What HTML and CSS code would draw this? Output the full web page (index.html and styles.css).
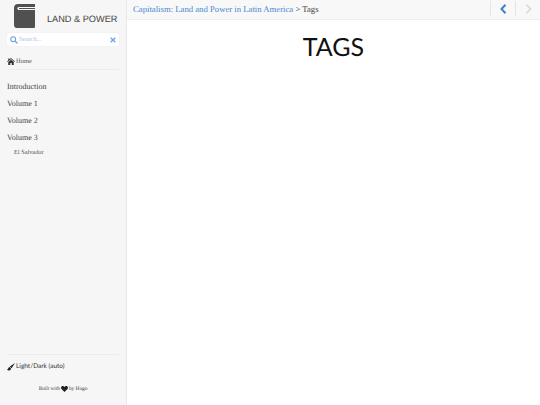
FILE: index.html
```html
<!DOCTYPE html>
<html lang="en">
<head>
  <meta charset="UTF-8">
  <title>Tags</title>
  <link rel="stylesheet" href="styles.css">
</head>
<body>
  <div class="layout">
    <!-- Sidebar -->
    <aside class="sidebar">
      <div class="brand">
        <svg class="brand-icon" width="21" height="24" viewBox="0 0 21 24">
          <path d="M4 0H21V3H5.500C4 3 3.300 3.700 3.300 4.500S4 6 5.500 6H21V22.500C21 23.500 20.500 24 19.500 24H3C1 24 0 23 0 21V4C0 1.500 1.500 0 4 0Z" fill="#505050"/>
          <path d="M5 4H21V5H5Z" fill="#505050"/>
        </svg>
        <span class="brand-name">LAND &amp; POWER</span>
      </div>
      <div class="search">
        <svg class="search-icon" width="8" height="8" viewBox="0 0 8 8">
          <circle cx="3.200" cy="3.200" r="2.400" fill="none" stroke="#6ea4e0" stroke-width="1.100"/>
          <path d="M5 5L7.500 7.500" stroke="#6ea4e0" stroke-width="1.300"/>
        </svg>
        <span class="search-text">Search...</span>
        <svg class="search-clear" width="6" height="6" viewBox="0 0 6 6">
          <path d="M.7 .7L5.300 5.300M5.300 .7L.7 5.300" stroke="#6ea4e0" stroke-width="1.400"/>
        </svg>
      </div>
      <div class="home">
        <svg width="8" height="7" viewBox="0 0 16 14">
          <path d="M8 0L16 7L15 8.200L8 2.200L1 8.200L0 7L2.500 4.800V1H5V2.600ZM8 3.500L13.500 8.200V14H9.500V10H6.500V14H2.500V8.200Z" fill="#333"/>
        </svg>
        <span>Home</span>
      </div>
      <nav class="menu">
        <a class="menu-item">Introduction</a>
        <a class="menu-item">Volume 1</a>
        <a class="menu-item">Volume 2</a>
        <a class="menu-item">Volume 3</a>
        <a class="menu-sub">El Salvador</a>
      </nav>
      <div class="sidebar-foot">
        <div class="theme">
          <svg width="8" height="8" viewBox="0 0 14 14">
            <path d="M14 0L5 6L8 9ZM4.500 7C2.500 7 2.500 10 0 12C2.500 14 7 13.500 7 9.500Z" fill="#222"/>
          </svg>
          <span>Light/Dark (auto)</span>
        </div>
        <div class="built">
          Built with
          <svg width="7" height="6" viewBox="0 0 14 12">
            <path d="M7 12L1 6C-1.500 3 1 0 3.500 0C5 0 6.300 .8 7 2C7.700 .8 9 0 10.500 0C13 0 15.500 3 13 6Z" fill="#222"/>
          </svg>
          by Hugo
        </div>
      </div>
    </aside>

    <!-- Content -->
    <main class="main">
      <header class="topbar">
        <div class="crumbs"><a class="crumb-link">Capitalism: Land and Power in Latin America</a> &gt; Tags</div>
        <div class="pager">
          <span class="pager-btn">
            <svg width="7" height="10" viewBox="0 0 7 10"><path d="M5.500 .8L1.500 5L5.500 9.200" fill="none" stroke="#3f7fd0" stroke-width="2"/></svg>
          </span>
          <span class="pager-btn">
            <svg width="7" height="10" viewBox="0 0 7 10"><path d="M1.500 .8L5.500 5L1.500 9.200" fill="none" stroke="#d8d8d8" stroke-width="1.600"/></svg>
          </span>
        </div>
      </header>
      <h1 class="title">TAGS</h1>
    </main>
  </div>
</body>
</html>
```
FILE: styles.css
```css
body {
  margin: 0;
  background: #fff;
  color: #222;
  font-family: "Liberation Serif", serif;
  text-rendering: geometricPrecision;
  overflow: hidden;
}
.layout {
  display: flex;
  height: 405px;
}

/* Sidebar */
.sidebar {
  width: 127px;
  flex: none;
  box-sizing: border-box;
  display: flex;
  flex-direction: column;
  padding: 0 7px;
  background: #f6f6f6;
  border-right: 1px solid #e8e8e8;
}
.brand {
  display: flex;
  align-items: flex-end;
  gap: 12px;
  height: 25px;
  padding: 5px 0 0 7px;
}
.brand-icon {
  flex: none;
  margin-bottom: 2px;
}
.brand-name {
  font-family: "Liberation Sans", sans-serif;
  font-size: 9.2px;
  line-height: 14px;
  margin-bottom: 4px;
  color: #444;
  white-space: nowrap;
}
.search {
  display: flex;
  align-items: center;
  gap: 1px;
  height: 13px;
  margin-top: 3px;
  padding: 0 3px;
  background: #fff;
  border-radius: 2px;
  box-shadow: 0 0 1px #dde;
}
.search-text {
  flex: 1;
  font-size: 6.5px;
  color: #a9c6e8;
}
.home {
  display: flex;
  align-items: center;
  gap: 1px;
  height: 24px;
  padding-top: 7px;
  box-sizing: border-box;
  font-size: 6.5px;
  color: #555;
  border-bottom: 1px solid #ececec;
}
.menu {
  display: flex;
  flex-direction: column;
  margin-top: 8px;
}
.menu-item {
  font-size: 8px;
  line-height: 17px;
  color: #444;
}
.menu-sub {
  font-size: 6.3px;
  line-height: 13px;
  padding-left: 7px;
  color: #555;
}
.sidebar-foot {
  margin-top: auto;
  border-top: 1px solid #ececec;
  padding-top: 7px;
  height: 51px;
  box-sizing: border-box;
}
.theme {
  display: flex;
  align-items: center;
  gap: 1px;
  font-family: "Lato", sans-serif;
  font-size: 6.5px;
  line-height: 10px;
  color: #333;
}
.built {
  display: flex;
  justify-content: center;
  align-items: center;
  gap: 1px;
  margin-top: 13px;
  font-size: 5.3px;
  line-height: 8px;
  color: #444;
}

/* Content */
.main {
  flex: 1;
  min-width: 0;
}
.topbar {
  display: flex;
  justify-content: space-between;
  align-items: center;
  height: 20px;
  padding-left: 6px;
  background: #f8f8f8;
  border-bottom: 1px solid #eeeeee;
  box-sizing: border-box;
}
.crumbs {
  font-size: 8.7px;
  padding-bottom: 2px;
  color: #444;
  white-space: nowrap;
}
.crumb-link {
  color: #4a86d0;
}
.pager {
  display: flex;
  height: 100%;
}
.pager-btn {
  display: flex;
  align-items: center;
  justify-content: center;
  width: 24px;
  margin: 1px 0 3px;
  border-left: 1px solid #e4e4e4;
}
.title {
  margin: 12px 0 0;
  text-align: center;
  font-family: "Lato", sans-serif;
  font-size: 25px;
  line-height: 30px;
  font-weight: 400;
  color: #111;
}
```
